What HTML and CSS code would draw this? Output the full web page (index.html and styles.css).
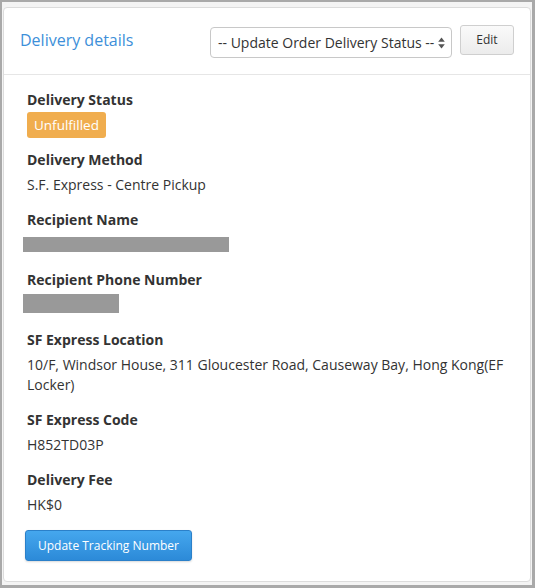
FILE: index.html
```html
<!DOCTYPE html>
<html lang="en">
<head>
<meta charset="utf-8">
<title>Delivery details</title>
<link rel="stylesheet" href="styles.css">
</head>
<body>
<div class="frame">
  <section class="panel">
    <header class="panel-head">
      <h2 class="panel-title">Delivery details</h2>
      <div class="select">
        <span class="select-text">-- Update Order Delivery Status --</span>
        <svg class="select-arrows" width="7" height="12" viewBox="0 0 7 12">
          <path d="M3.5 0.5 L6.8 4.8 L0.2 4.8 Z" fill="#555"/>
          <path d="M3.5 11.5 L6.8 7.2 L0.2 7.2 Z" fill="#555"/>
        </svg>
      </div>
      <button class="btn-edit" type="button">Edit</button>
    </header>
    <div class="panel-body">
      <div class="field field-status">
        <div class="label">Delivery Status</div>
        <span class="badge">Unfulfilled</span>
      </div>
      <div class="field">
        <div class="label">Delivery Method</div>
        <div class="value">S.F. Express - Centre Pickup</div>
      </div>
      <div class="field">
        <div class="label">Recipient Name</div>
        <div class="value"><span class="redact redact-name"></span></div>
      </div>
      <div class="field">
        <div class="label">Recipient Phone Number</div>
        <div class="value"><span class="redact redact-phone"></span></div>
      </div>
      <div class="field">
        <div class="label">SF Express Location</div>
        <div class="value">10/F, Windsor House, 311 Gloucester Road, Causeway Bay, Hong Kong(EF Locker)</div>
      </div>
      <div class="field">
        <div class="label">SF Express Code</div>
        <div class="value">H852TD03P</div>
      </div>
      <div class="field">
        <div class="label">Delivery Fee</div>
        <div class="value">HK$0</div>
      </div>
      <button class="btn-primary" type="button">Update Tracking Number</button>
    </div>
  </section>
</div>
</body>
</html>
```

FILE: styles.css
```css
html, body {
  margin: 0;
  padding: 0;
}
body {
  font-family: "Open Sans", "Liberation Sans", sans-serif;
  color: #333;
}
.frame {
  box-sizing: border-box;
  width: 535px;
  height: 588px;
  border-style: solid;
  border-color: #a9a9a9;
  border-width: 2px 3px 3px 2px;
  background: #f4f4f4;
  padding: 5px 1px 3px 1px;
  display: flex;
  flex-direction: column;
}
.panel {
  flex: 1;
  background: #fff;
  border: 1px solid #dcdcdc;
  border-radius: 4px;
  display: flex;
  flex-direction: column;
}
.panel-head {
  display: flex;
  align-items: center;
  height: 66px;
  padding: 0 16px;
  border-bottom: 1px solid #e6e6e6;
}
.panel-title {
  margin: 0;
  font-size: 16px;
  font-weight: 400;
  color: #3d8fd9;
  line-height: 20px;
  margin-top: -2px;
}
.select {
  margin-left: auto;
  box-sizing: border-box;
  width: 242px;
  height: 31px;
  margin-top: 3px;
  border: 1px solid #c8c8c8;
  border-radius: 4px;
  background: #fff;
  display: flex;
  align-items: center;
  padding: 0 6px 0 7px;
  font-size: 14px;
  color: #333;
}
.select-text {
  flex: 1;
  white-space: nowrap;
}
.select-arrows {
  display: block;
}
.btn-edit {
  box-sizing: border-box;
  margin-left: 8px;
  width: 54px;
  height: 30px;
  margin-top: -3px;
  border: 1px solid #cfcfcf;
  border-radius: 3px;
  background: linear-gradient(#fafafa, #ececec);
  font-family: inherit;
  font-size: 12px;
  color: #333;
  padding: 0;
}
.panel-body {
  padding: 15px 16px 0 23px;
}
.field {
  margin-bottom: 15px;
}
.field-status {
  margin-bottom: 12px;
}
.label {
  font-size: 14px;
  font-weight: 700;
  line-height: 20px;
  color: #333;
}
.value {
  margin-top: 5px;
  font-size: 14px;
  line-height: 20px;
  color: #333;
}
.badge {
  display: inline-block;
  margin-top: 2px;
  height: 26px;
  line-height: 26px;
  padding: 0 7px;
  border-radius: 3px;
  background: #f0ad4e;
  color: #fff;
  font-size: 13.5px;
}
.redact {
  display: inline-block;
  vertical-align: top;
  background: #999;
  margin-left: -4px;
}
.redact-name {
  width: 206px;
  height: 15px;
  margin-top: 2px;
}
.redact-phone {
  width: 96px;
  height: 19px;
  margin-top: -1px;
}
.btn-primary {
  display: block;
  box-sizing: border-box;
  margin-left: -2px;
  width: 167px;
  height: 31px;
  border: 1px solid #2b80c9;
  border-radius: 3px;
  background: linear-gradient(#45a7ee, #2c8ad8);
  color: #fff;
  font-family: inherit;
  font-size: 12px;
  padding: 0;
  box-shadow: 0 1px 2px rgba(0,0,0,0.15);
}
```
